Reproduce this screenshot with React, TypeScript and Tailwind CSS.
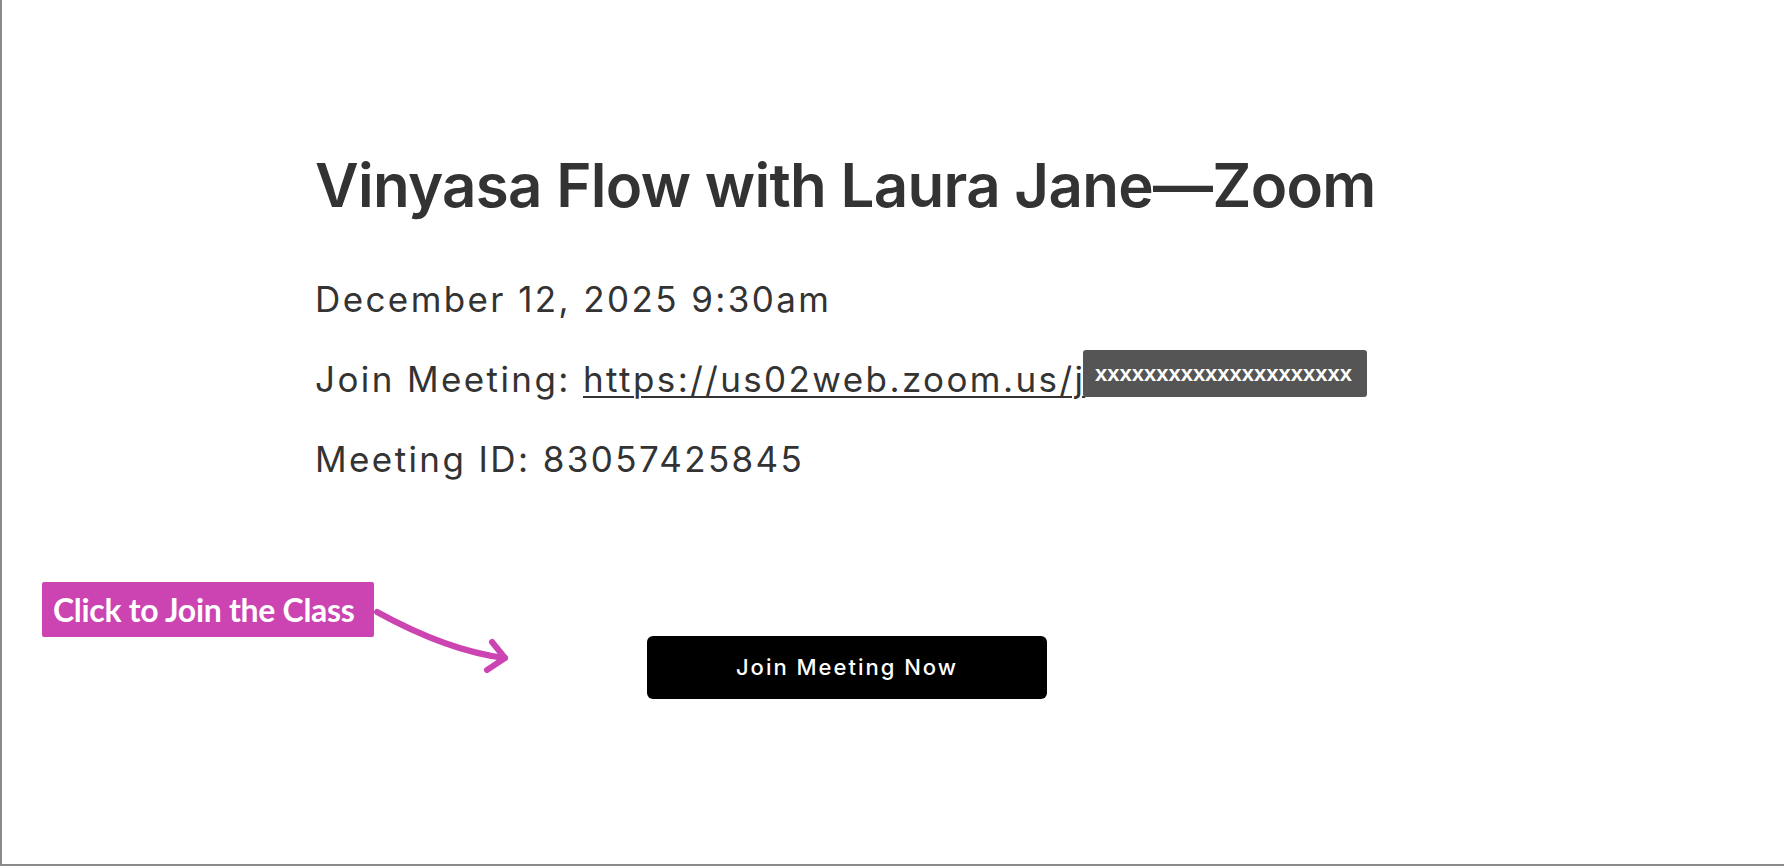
export default function App() {
  return (
    <div className="relative h-[866px] w-full overflow-hidden border-b-2 border-l-2 border-[#8a8a8a] bg-white font-['Inter',sans-serif] text-[#333333]">
      <div className="ml-[313px] w-[1064px] pt-[149px]">
        <h1 className="whitespace-nowrap text-[60px] font-semibold leading-[72px] tracking-[-0.7px]">
          Vinyasa Flow with Laura Jane—Zoom
        </h1>

        <div className="mt-[53px] flex flex-col gap-[29px] text-[35px] leading-[51px] tracking-[2.4px]">
          <p>December 12, 2025 9:30am</p>
          <p className="relative">
            Join Meeting:{" "}
            <a href="#" className="underline decoration-2 underline-offset-[4px]">
              https://us02web.zoom.us/j
            </a>
            {/* redacted meeting path */}
            <span className="absolute left-[768px] top-[-4px] flex h-[47px] w-[284px] items-center rounded-[3px] bg-[#555555] pl-[12px] font-['Liberation_Sans',Arial,sans-serif] text-[22px] font-bold leading-none tracking-normal text-white">
              xxxxxxxxxxxxxxxxxxxxx
            </span>
          </p>
          <p>Meeting ID: 83057425845</p>
        </div>

        <div className="mt-[151px] flex justify-center">
          <button className="h-[63px] w-[400px] rounded-[6px] bg-black text-[22px] font-medium tracking-[2px] text-white">
            Join Meeting Now
          </button>
        </div>
      </div>

      {/* annotation */}
      <div className="absolute left-[40px] top-[582px] flex h-[55px] w-[332px] items-center rounded-[2px] bg-[#cb44b1] pl-[11px] font-['Lato',sans-serif] text-[32px] font-bold tracking-[-0.3px] text-white">
        Click to Join the Class
      </div>
      <svg
        className="absolute left-[370px] top-[600px]"
        width="150"
        height="80"
        viewBox="0 0 150 80"
        fill="none"
        stroke="#cb44b1"
        strokeWidth="6"
        strokeLinecap="round"
        strokeLinejoin="round"
      >
        <path d="M5 12 Q76 51 133 58" />
        <path d="M120 42 L133 58 L115 70" />
      </svg>
    </div>
  );
}
